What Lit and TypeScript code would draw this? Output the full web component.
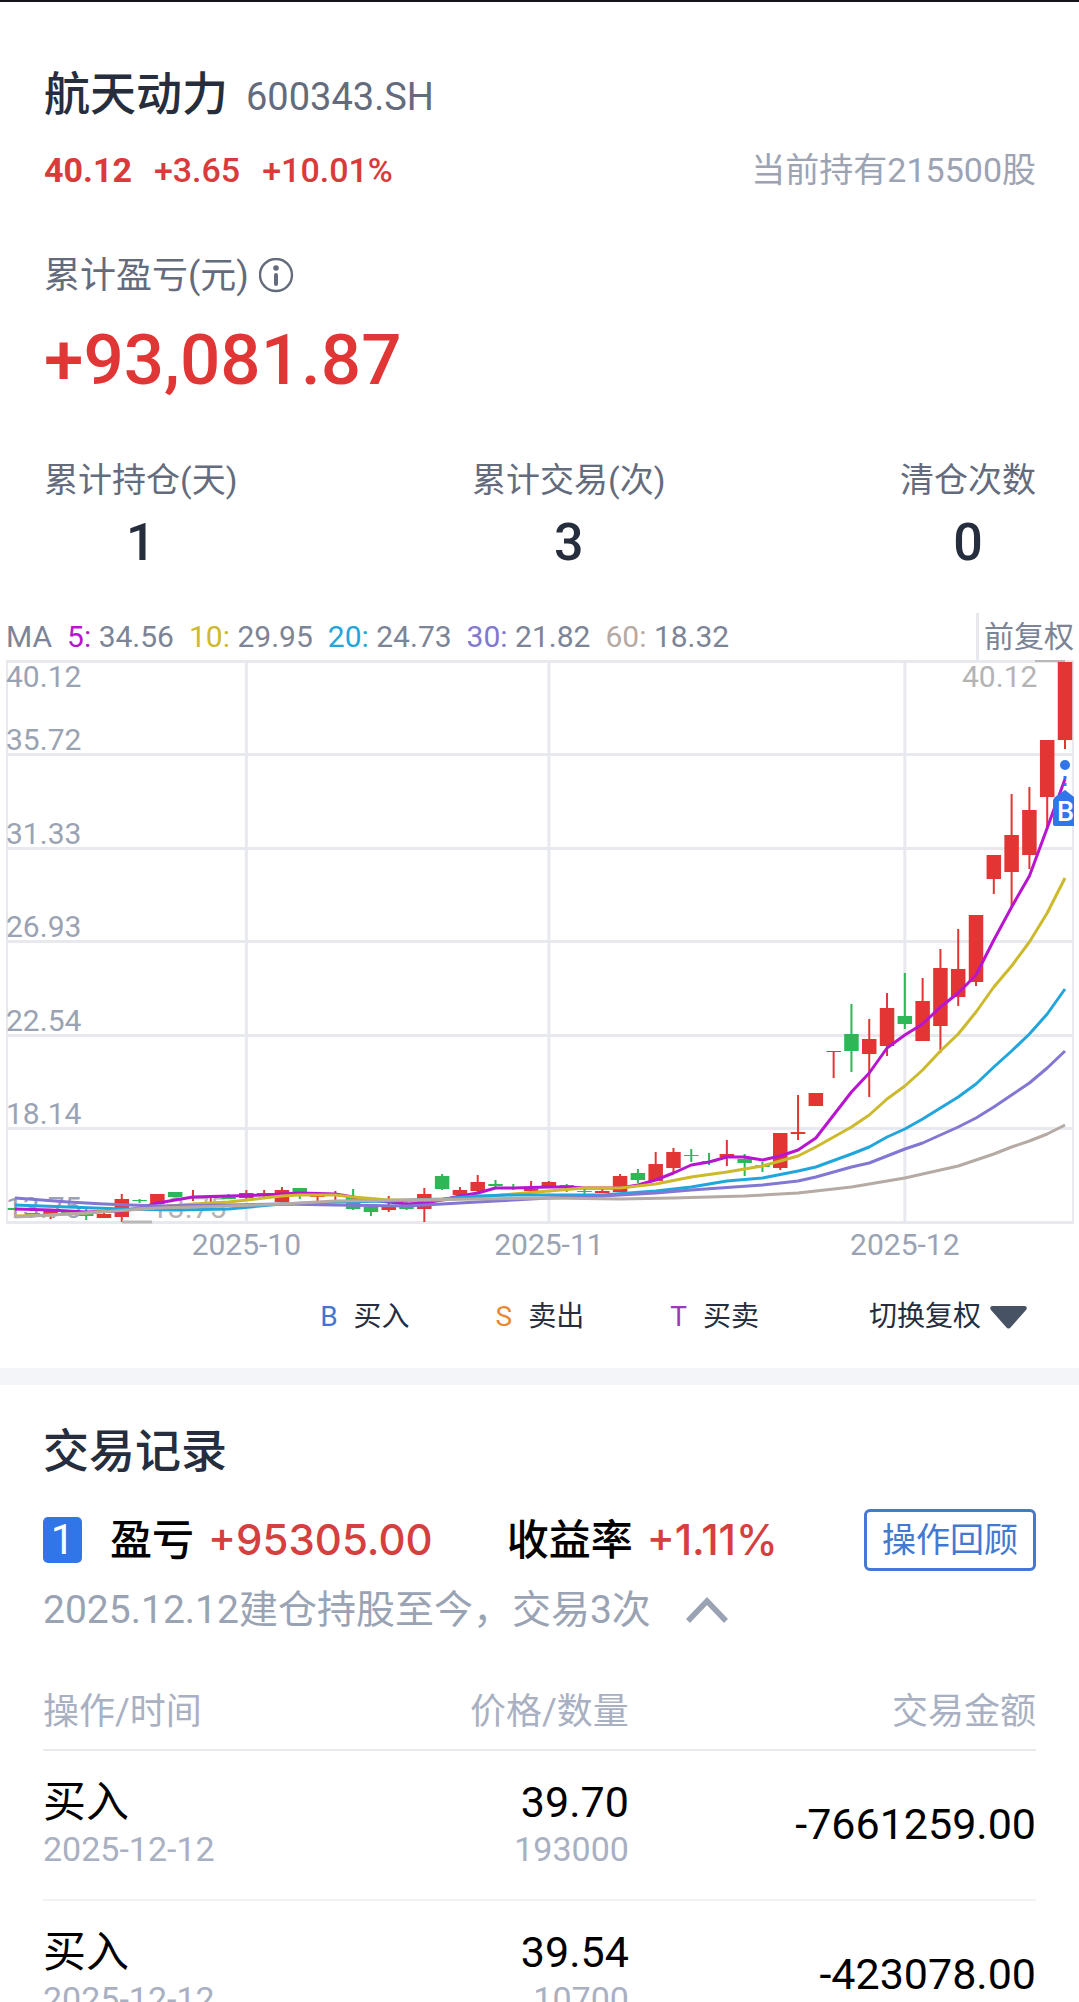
import { LitElement, html, svg, css } from "lit";
import { customElement, state } from "lit/decorators.js";

const FONT = css`Roboto, "Noto Sans CJK SC", "Noto Sans", sans-serif`;

type Candle = [up: number, top: number, bottom: number, high: number, low: number];

/* One entry per trading day: direction, body top, body bottom, wick top, wick bottom. */
const CANDLES: Candle[] = [
  [0, 1208, 1210, 1208, 1210], [0, 1213, 1215, 1213, 1215], [1, 1210, 1214, 1209, 1219],
  [0, 1212, 1214, 1212, 1214], [0, 1214, 1216, 1209, 1220], [1, 1214, 1218, 1213, 1218],
  [1, 1199, 1217, 1194, 1222], [0, 1200, 1201, 1199, 1203], [1, 1194, 1204, 1194, 1204],
  [0, 1192, 1197, 1192, 1197], [1, 1197, 1198, 1190, 1201], [1, 1197, 1198, 1196, 1202],
  [0, 1197, 1199, 1194, 1199], [1, 1193, 1198, 1190, 1199], [1, 1193, 1195, 1190, 1197],
  [1, 1190, 1202, 1187, 1202], [0, 1188, 1194, 1188, 1199], [1, 1196, 1197, 1195, 1201],
  [1, 1194, 1196, 1191, 1203], [0, 1197, 1209, 1189, 1210], [0, 1207, 1212, 1206, 1216],
  [1, 1205, 1210, 1196, 1212], [0, 1207, 1209, 1202, 1210], [1, 1194, 1209, 1188, 1222],
  [0, 1176, 1189, 1174, 1190], [1, 1190, 1195, 1187, 1195], [1, 1182, 1191, 1175, 1192],
  [0, 1184, 1186, 1180, 1188], [0, 1187, 1189, 1184, 1190], [1, 1189, 1191, 1181, 1193],
  [1, 1182, 1187, 1181, 1188], [0, 1185, 1187, 1184, 1192], [0, 1191, 1192, 1188, 1194],
  [1, 1191, 1193, 1189, 1193], [1, 1176, 1192, 1174, 1192], [0, 1173, 1180, 1169, 1183],
  [1, 1164, 1181, 1152, 1181], [1, 1152, 1168, 1148, 1172], [0, 1155, 1156, 1149, 1162],
  [0, 1161, 1162, 1153, 1165], [1, 1154, 1157, 1140, 1166], [0, 1159, 1163, 1154, 1176],
  [0, 1165, 1167, 1162, 1172], [1, 1133, 1168, 1133, 1170], [1, 1132, 1134, 1095, 1140],
  [1, 1093, 1106, 1093, 1106], [1, 1051, 1052, 1051, 1078], [0, 1034, 1051, 1004, 1072],
  [1, 1039, 1054, 1019, 1097], [1, 1008, 1046, 993, 1056], [0, 1016, 1024, 973, 1029],
  [1, 1001, 1041, 978, 1041], [1, 968, 1026, 949, 1053], [1, 969, 997, 929, 1006],
  [1, 915, 982, 915, 986], [1, 855, 879, 855, 894], [1, 835, 872, 794, 907],
  [1, 810, 855, 787, 869], [1, 740, 797, 740, 827], [1, 662, 740, 662, 749],
];

/* Moving averages as [day index, y] pairs. */
const AVERAGES: { period: number; value: string; color: string; points: [number, number][] }[] = [
  {
    period: 5, value: "34.56", color: "#b815cf",
    points: [[0, 1209], [2, 1210], [4, 1212], [6, 1211], [7, 1208], [8, 1203], [9, 1200], [10, 1197],
      [12, 1196], [14, 1195], [16, 1193], [18, 1194], [19, 1197], [20, 1200], [21, 1202], [22, 1204],
      [23, 1203], [24, 1200], [25, 1196], [26, 1193], [27, 1188], [28, 1188], [30, 1187], [31, 1187],
      [32, 1188], [34, 1188], [35, 1185], [36, 1180], [37, 1173], [38, 1165], [39, 1162], [40, 1157],
      [41, 1157], [42, 1160], [43, 1156], [44, 1150], [45, 1138], [46, 1115], [47, 1092], [48, 1073],
      [49, 1048], [50, 1035], [51, 1024], [52, 1007], [53, 993], [54, 975], [55, 940], [56, 907],
      [57, 876], [58, 828], [59, 779]],
  },
  {
    period: 10, value: "29.95", color: "#cdb92c",
    points: [[0, 1216], [2, 1215], [4, 1213], [6, 1210], [8, 1207], [10, 1204], [12, 1202], [14, 1198],
      [15, 1196], [16, 1195], [18, 1195], [19, 1197], [21, 1200], [24, 1200], [26, 1197], [28, 1194],
      [30, 1191], [32, 1188], [34, 1188], [36, 1184], [38, 1177], [40, 1172], [42, 1166], [43, 1161],
      [44, 1156], [45, 1147], [46, 1137], [47, 1127], [48, 1115], [49, 1099], [50, 1086], [51, 1070],
      [52, 1051], [53, 1034], [54, 1012], [55, 987], [56, 966], [57, 942], [58, 913], [59, 878]],
  },
  {
    period: 20, value: "24.73", color: "#21a6dc",
    points: [[0, 1205], [3, 1207], [6, 1209], [9, 1210], [12, 1209], [15, 1204], [18, 1202], [21, 1201],
      [24, 1199], [26, 1196], [28, 1195], [33, 1195], [36, 1191], [38, 1187], [40, 1181], [42, 1178],
      [44, 1171], [45, 1167], [47, 1154], [48, 1147], [49, 1137], [50, 1129], [51, 1119], [52, 1108],
      [53, 1097], [54, 1084], [55, 1067], [56, 1051], [57, 1034], [58, 1014], [59, 989]],
  },
  {
    period: 30, value: "21.82", color: "#8277d2",
    points: [[0, 1198], [3, 1202], [5, 1204], [8, 1206], [12, 1205], [15, 1204], [18, 1205], [22, 1206],
      [24, 1204], [26, 1202], [28, 1200], [30, 1198], [33, 1196], [36, 1193], [38, 1190], [42, 1185],
      [44, 1181], [45, 1177], [47, 1167], [48, 1163], [49, 1156], [50, 1149], [51, 1143], [52, 1135],
      [53, 1127], [54, 1118], [55, 1107], [56, 1095], [57, 1083], [58, 1068], [59, 1051]],
  },
  {
    period: 60, value: "18.32", color: "#b5aaa4",
    points: [[0, 1217], [4, 1213], [8, 1208], [12, 1206], [15, 1204], [18, 1201], [22, 1200], [26, 1199],
      [30, 1198], [34, 1199], [37, 1198], [41, 1196], [44, 1193], [45, 1191], [47, 1187], [49, 1181],
      [50, 1178], [51, 1174], [52, 1170], [53, 1166], [54, 1160], [55, 1154], [56, 1147], [57, 1141],
      [58, 1134], [59, 1125]],
  },
];

const dayX = (i: number) => 15 + (i * 1050) / 59;

@customElement("price-chart")
export class PriceChart extends LitElement {
  static styles = css`
    :host { display: block; font-family: ${FONT}; }
    .bar { display: flex; justify-content: space-between; height: 47px; padding: 0 5px 0 6px; }
    .averages { display: flex; align-items: center; gap: 15px; font-size: 30px; line-height: 40px; color: #7c8496; white-space: nowrap; }
    .adjust { display: flex; align-items: center; border-left: 3px solid #e8e9ef; padding-left: 5px; font-size: 30px; line-height: 40px; color: #7c8496; white-space: nowrap; }
    .plot { display: block; width: 100%; height: auto; }
    .grid { stroke: #e8e9ef; stroke-width: 3; }
    .edge { stroke: #e8e9ef; stroke-width: 2; }
    .axis { font-size: 30px; fill: #9aa3b3; }
    .extreme { font-size: 30px; fill: #b4b4b4; }
    .extreme-line { stroke: #b8b8b6; stroke-width: 3; }
    .up { fill: #e43535; }
    .down { fill: #2eb757; }
    .line { fill: none; stroke-width: 3; stroke-linejoin: round; }
    .middle { text-anchor: middle; }
    .marker { fill: #3076e8; }
    .marker-stem { stroke: #3076e8; stroke-width: 3; stroke-dasharray: 3 4; }
    .marker-text { font-size: 27px; font-weight: 500; fill: #fff; }
  `;

  render() {
    const rows = [661, 754, 848, 941, 1035, 1128, 1222];
    const months: [number, string][] = [[13, "2025-10"], [30, "2025-11"], [50, "2025-12"]];
    const prices: [number, string][] = [
      [687, "40.12"], [750, "35.72"], [844, "31.33"], [937, "26.93"],
      [1031, "22.54"], [1124, "18.14"], [1218, "13.75"],
    ];
    return html`
      <div class="bar">
        <div class="averages">
          <span>MA</span>
          ${AVERAGES.map((a) => html`<span><span style="color:${a.color}">${a.period}:</span> ${a.value}</span>`)}
        </div>
        <div class="adjust">前复权</div>
      </div>
      <svg class="plot" viewBox="0 660 1079 610" role="img" aria-label="日K线">
        <defs><clipPath id="area"><rect x="7" y="660" width="1067" height="564"></rect></clipPath></defs>
        ${rows.map((y) => svg`<line class="grid" x1="6" x2="1074" y1=${y + 0.5} y2=${y + 0.5}></line>`)}
        ${months.map(([d]) => svg`<line class="grid" x1=${dayX(d)} x2=${dayX(d)} y1="661" y2="1222"></line>`)}
        <line class="edge" x1="7" x2="7" y1="661" y2="1222"></line>
        <line class="edge" x1="1073" x2="1073" y1="661" y2="1222"></line>
        ${prices.map(([y, t]) => svg`<text class="axis" x="6" y=${y}>${t}</text>`)}
        ${months.map(([d, t]) => svg`<text class="axis middle" x=${dayX(d)} y="1255">${t}</text>`)}
        <text class="extreme" x="151" y="1218">13.75</text>
        <text class="extreme" x="962" y="687">40.12</text>
        <g clip-path="url(#area)">
          ${CANDLES.map(([up, top, bottom, high, low], i) => svg`
            <g class=${up ? "up" : "down"}>
              <rect x=${dayX(i) - 7.25} y=${top} width="14.5" height=${bottom - top}></rect>
              <rect x=${dayX(i) - 1} y=${high} width="2" height=${low - high}></rect>
            </g>`)}
          ${AVERAGES.map((a) => svg`<polyline class="line" stroke=${a.color}
            points=${a.points.map(([d, y]) => `${dayX(d)},${y}`).join(" ")}></polyline>`)}
          <circle class="marker" cx="1065" cy="765" r="5"></circle>
          <line class="marker-stem" x1="1065" x2="1065" y1="776" y2="790"></line>
          <path class="marker" d="M1065 790 L1074 797 V826 H1055 Q1053 826 1053 824 V801 Q1053 799 1055 797 Z"></path>
          <text class="marker-text" x="1057" y="821">B</text>
        </g>
        <line class="extreme-line" x1="1035" x2="1065" y1="660.5" y2="660.5"></line>
        <line class="extreme-line" x1="122" x2="152" y1="1222" y2="1222"></line>
      </svg>
    `;
  }
}

@customElement("app-root")
export class AppRoot extends LitElement {
  static styles = css`
    :host { display: block; max-height: 100vh; overflow: hidden; background: #fff; color: #262d3d; font-family: ${FONT}; border-top: 2px solid #14161c; box-sizing: border-box; }
    h1, h2, p, dl, dd, dt { margin: 0; font-weight: 400; }
    button { font-family: inherit; background: none; border: 0; padding: 0; margin: 0; color: inherit; }
    svg { display: block; }
    .header { padding: 62px 43px 40px 44px; }
    .name-row { display: flex; align-items: baseline; gap: 18px; line-height: 60px; }
    .name { font-size: 46px; font-weight: 500; }
    .code { font-size: 38px; color: #646b7c; }
    .quote-row { display: flex; justify-content: space-between; margin-top: 23px; font-size: 34px; line-height: 40px; }
    .quote { display: flex; gap: 22px; color: #d93a3a; font-weight: 500; }
    .price { font-weight: 700; }
    .holding { color: #9ca3b3; }
    .label-row { display: flex; align-items: center; gap: 10px; margin-top: 66px; font-size: 36px; line-height: 40px; color: #646b7c; }
    .profit { margin-top: 24px; font-size: 71px; line-height: 80px; font-weight: 500; color: #e13636; }
    .stats { display: flex; justify-content: space-between; margin-top: 60px; text-align: center; }
    .stats dt { font-size: 34px; line-height: 40px; color: #646b7c; }
    .stats dd { margin-top: 13px; font-size: 52px; line-height: 60px; font-weight: 500; }
    .legend { display: flex; justify-content: flex-end; gap: 86px; padding: 27px 52px 31px; font-size: 28px; line-height: 40px; }
    .legend-item { display: flex; gap: 16px; }
    .buy { color: #3f76cf; }
    .sell { color: #e58a35; }
    .both { color: #9b3bb8; }
    .switch { display: flex; align-items: center; gap: 9px; margin-left: 24px; font-size: 28px; line-height: 40px; }
    .records { border-top: 17px solid #f4f5f9; padding: 36px 43px 0 43px; }
    .records-title { font-size: 46px; line-height: 60px; font-weight: 500; }
    .summary { display: flex; align-items: center; margin-top: 28px; color: #000; font-size: 42px; line-height: 46px; font-weight: 500; white-space: nowrap; }
    .index { width: 39px; border-radius: 5px; background: #3076e8; color: #fff; text-align: center; font-weight: 400; }
    .pair { display: flex; align-items: baseline; gap: 14px; }
    .gain { margin: 0 74px 0 28px; }
    .rise { color: #d5403f; font-family: Inter, Roboto, sans-serif; }
    .review { margin-left: auto; border: 3px solid #4379d0; border-radius: 6px; padding: 8px 15px; color: #4379d0; font-size: 34px; line-height: 40px; }
    .note { display: flex; align-items: center; gap: 34px; margin-top: 14px; font-size: 39px; line-height: 50px; color: #9aa3b3; }
    .trades { width: 100%; margin-top: 36px; border-collapse: collapse; table-layout: fixed; text-align: right; color: #000; }
    .trades th { width: 26%; padding: 16px 0 12px; border-bottom: 2px solid #e9eaed; font-size: 36px; line-height: 50px; font-weight: 400; color: #a8b0c2; }
    .trades .first { width: 33%; text-align: left; }
    .trades .last { width: 41%; }
    .trades td { padding: 26px 0 28px; border-bottom: 2px solid #f1f2f4; font-size: 43px; line-height: 50px; }
    .sub { font-size: 34px; line-height: 44px; color: #a8b0c2; }
  `;

  @state() private open = true;

  private trades = [
    { action: "买入", date: "2025-12-12", price: "39.70", count: "193000", amount: "-7661259.00" },
    { action: "买入", date: "2025-12-12", price: "39.54", count: "10700", amount: "-423078.00" },
  ];

  render() {
    return html`
      <section class="header">
        <div class="name-row">
          <h1 class="name">航天动力</h1>
          <span class="code">600343.SH</span>
        </div>
        <div class="quote-row">
          <div class="quote"><span class="price">40.12</span><span>+3.65</span><span>+10.01%</span></div>
          <span class="holding">当前持有215500股</span>
        </div>
        <div class="label-row">
          <span>累计盈亏(元)</span>
          <button aria-label="说明">
            <svg width="36" height="36" viewBox="0 0 36 36" fill="none" stroke="#646b7c">
              <circle cx="17" cy="17" r="16" stroke-width="2.4"></circle>
              <circle cx="17" cy="10" r="2.8" fill="#646b7c" stroke="none"></circle>
              <path d="M17 17V26" stroke-width="4" stroke-linecap="round"></path>
            </svg>
          </button>
        </div>
        <p class="profit">+93,081.87</p>
        <dl class="stats">
          <div><dt>累计持仓(天)</dt><dd>1</dd></div>
          <div><dt>累计交易(次)</dt><dd>3</dd></div>
          <div><dt>清仓次数</dt><dd>0</dd></div>
        </dl>
      </section>
      <price-chart></price-chart>
      <div class="legend">
        <div class="legend-item"><span class="buy">B</span><span>买入</span></div>
        <div class="legend-item"><span class="sell">S</span><span>卖出</span></div>
        <div class="legend-item"><span class="both">T</span><span>买卖</span></div>
        <button class="switch">切换复权
          <svg width="37" height="23" viewBox="0 0 37 23"><path fill="#485265" d="M2 0H35Q38 1 36 4L21 21Q18.500 24 16 21L1 4Q-1 1 2 0Z"></path></svg>
        </button>
      </div>
      <section class="records">
        <h2 class="records-title">交易记录</h2>
        <div class="summary">
          <span class="index">1</span>
          <div class="pair gain"><span>盈亏</span><span class="rise">+95305.00</span></div>
          <div class="pair"><span>收益率</span><span class="rise">+1.11%</span></div>
          <button class="review">操作回顾</button>
        </div>
        <div class="note">
          <span>2025.12.12建仓持股至今，交易3次</span>
          <button aria-label="展开或收起" aria-expanded=${this.open} @click=${() => (this.open = !this.open)}>
            <svg width="44" height="28" viewBox="0 0 44 28" fill="none" stroke="#9aa3b3" stroke-width="5.500"><path d="M3 25L22 5L41 25"></path></svg>
          </button>
        </div>
        ${this.open
          ? html`<table class="trades">
              <thead>
                <tr><th class="first">操作/时间</th><th>价格/数量</th><th class="last">交易金额</th></tr>
              </thead>
              <tbody>
                ${this.trades.map((t) => html`<tr>
                  <td class="first">${t.action}<div class="sub">${t.date}</div></td>
                  <td>${t.price}<div class="sub">${t.count}</div></td>
                  <td>${t.amount}</td>
                </tr>`)}
              </tbody>
            </table>`
          : null}
      </section>
    `;
  }
}
